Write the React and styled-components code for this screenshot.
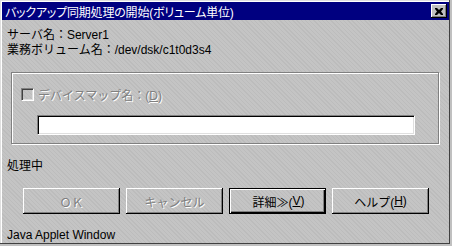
import React from 'react';
import styled, { createGlobalStyle } from 'styled-components';

const GlobalStyle = createGlobalStyle`
  html, body {
    margin: 0;
    padding: 0;
    background: #c0c0c0;
  }
  body {
    font-family: "Liberation Sans", "Noto Sans CJK JP", sans-serif;
    font-size: 12px;
    color: #000;
  }
`;

const texture = `repeating-linear-gradient(45deg, #bcbcbc 0px, #bcbcbc 1px, #c4c4c4 1px, #c4c4c4 3px)`;

const Frame = styled.div`
  width: 452px;
  height: 246px;
  box-sizing: border-box;
  padding: 2px 3px 3px 2px;
  background: ${texture};
  box-shadow: inset -2px -2px #c0c0c0, inset -3px -3px #404040, inset 1px 1px #dfdfdf, inset 2px 2px #fff;
  display: flex;
  flex-direction: column;
  overflow: hidden;
`;

const TitleBar = styled.div`
  height: 18px;
  background: #000080;
  color: #fff;
  display: flex;
  align-items: center;
  justify-content: space-between;
  padding: 0 2px 0 3px;
`;

const TitleText = styled.span`
  font-size: 12px;
  font-feature-settings: "palt";
  letter-spacing: -0.2px;
  white-space: nowrap;
`;

const CloseButton = styled.div`
  width: 16px;
  height: 14px;
  box-sizing: border-box;
  background: #c0c0c0;
  box-shadow: inset -1px -1px #000, inset 1px 1px #fff, inset -2px -2px #808080;
  display: flex;
  align-items: center;
  justify-content: center;
`;

const Body = styled.div`
  flex: 1;
  display: flex;
  flex-direction: column;
  padding: 8px 0 0 5px;
`;

const InfoLine = styled.div`
  line-height: 15px;
  height: 15px;
  white-space: nowrap;
`;

const Group = styled.div`
  margin: 14px 0 0 4px;
  width: 428px;
  height: 72px;
  box-sizing: border-box;
  border: 1px solid #808080;
  box-shadow: inset 1px 1px #fff, 1px 1px #fff;
  padding: 15px 0 0 9px;
  display: flex;
  flex-direction: column;
`;

const CheckRow = styled.div`
  display: flex;
  align-items: center;
  gap: 4px;
  height: 13px;
`;

const CheckBox = styled.div`
  width: 13px;
  height: 13px;
  box-sizing: border-box;
  border-top: 1px solid #808080;
  border-left: 1px solid #808080;
  border-right: 1px solid #fff;
  border-bottom: 1px solid #fff;
  box-shadow: inset 1px 1px #404040, inset -1px -1px #dfdfdf;
`;

const Disabled = styled.span`
  color: #808080;
  text-shadow: 1px 1px 0 #fff;
  white-space: nowrap;
`;

const U = styled.span`
  text-decoration: underline;
`;

const TextField = styled.div`
  margin: 14px 0 0 16px;
  width: 378px;
  height: 20px;
  box-sizing: border-box;
  background: #fff;
  border-top: 1px solid #808080;
  border-left: 1px solid #808080;
  border-right: 1px solid #fff;
  border-bottom: 1px solid #fff;
  box-shadow: inset 1px 1px #000, inset -1px -1px #dfdfdf;
`;

const Status = styled.div`
  margin-top: 15px;
  line-height: 15px;
  height: 15px;
`;

const ButtonRow = styled.div`
  display: flex;
  gap: 6px;
  margin: 14px 0 0 16px;
`;

const Button = styled.div`
  width: 97px;
  height: 26px;
  box-sizing: border-box;
  background: ${texture};
  display: flex;
  align-items: center;
  justify-content: center;
  white-space: nowrap;
  box-shadow: ${p => p.$default
    ? 'inset 0 0 0 1px #000, inset 1px 1px #000, inset 2px 2px #fff, inset -2px -2px #000, inset -3px -3px #808080'
    : 'inset -1px -1px #000, inset 1px 1px #fff, inset -2px -2px #808080'};
  color: ${p => p.$disabled ? '#808080' : '#000'};
  text-shadow: ${p => p.$disabled ? '1px 1px 0 #fff' : 'none'};
  padding-left: ${p => p.$default ? '2px' : '0'};
`;

const Footer = styled.div`
  margin-top: 14px;
  line-height: 15px;
  height: 15px;
`;

export default function App() {
  return (
    <>
      <GlobalStyle />
      <Frame>
        <TitleBar>
          <TitleText>バックアップ同期処理の開始(ボリューム単位)</TitleText>
          <CloseButton>
            <svg width="8" height="7" viewBox="0 0 8 7">
              <path d="M0 0h2l2 2 2-2h2v1L6 3.5 8 6v1H6L4 5 2 7H0V6l2-2.5L0 1z" fill="#000" />
            </svg>
          </CloseButton>
        </TitleBar>
        <Body>
          <InfoLine>サーバ名：Server1</InfoLine>
          <InfoLine>業務ボリューム名：/dev/dsk/c1t0d3s4</InfoLine>
          <Group>
            <CheckRow>
              <CheckBox />
              <Disabled>デバイスマップ名：(<U>D</U>)</Disabled>
            </CheckRow>
            <TextField />
          </Group>
          <Status>処理中</Status>
          <ButtonRow>
            <Button $disabled>ＯＫ</Button>
            <Button $disabled>キャンセル</Button>
            <Button $default>詳細≫(<U>V</U>)</Button>
            <Button>ヘルプ(<U>H</U>)</Button>
          </ButtonRow>
          <Footer>Java Applet Window</Footer>
        </Body>
      </Frame>
    </>
  );
}
